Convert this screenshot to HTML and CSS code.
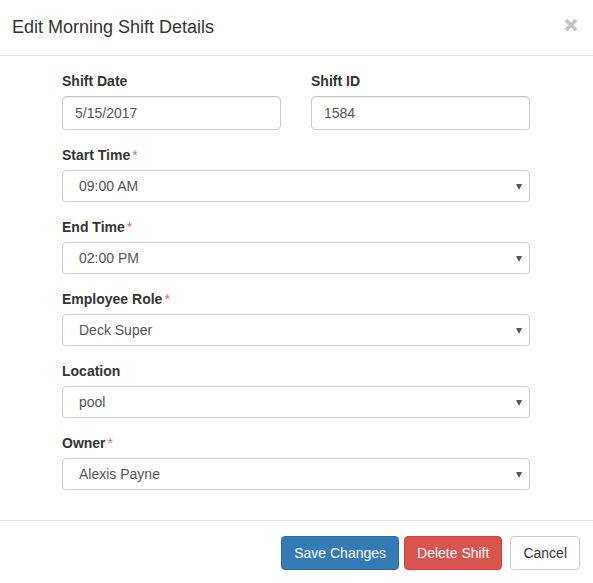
FILE: index.html
```html
<!DOCTYPE html>
<html>
<head>
<meta charset="utf-8">
<link rel="stylesheet" href="styles.css">
</head>
<body>
<div class="modal">
  <div class="modal-header">
    <h4 class="modal-title">Edit Morning Shift Details</h4>
    <button class="close" aria-label="Close">
      <svg width="14" height="14" viewBox="0 0 14 14"><path d="M2 2 L12 12 M12 2 L2 12" stroke="#c4c4c4" stroke-width="3.6" stroke-linecap="butt"/></svg>
    </button>
  </div>
  <div class="modal-body">
    <form class="form">
      <div class="row">
        <div class="form-group half">
          <label class="label">Shift Date</label>
          <div class="input">5/15/2017</div>
        </div>
        <div class="form-group half">
          <label class="label">Shift ID</label>
          <div class="input">1584</div>
        </div>
      </div>
      <div class="form-group">
        <label class="label">Start Time<span class="req">*</span></label>
        <div class="select">09:00 AM<span class="caret"></span></div>
      </div>
      <div class="form-group">
        <label class="label">End Time<span class="req">*</span></label>
        <div class="select">02:00 PM<span class="caret"></span></div>
      </div>
      <div class="form-group">
        <label class="label">Employee Role<span class="req">*</span></label>
        <div class="select">Deck Super<span class="caret"></span></div>
      </div>
      <div class="form-group">
        <label class="label">Location</label>
        <div class="select">pool<span class="caret"></span></div>
      </div>
      <div class="form-group">
        <label class="label">Owner<span class="req">*</span></label>
        <div class="select">Alexis Payne<span class="caret"></span></div>
      </div>
    </form>
  </div>
  <div class="modal-footer">
    <button class="btn btn-primary">Save Changes</button>
    <button class="btn btn-danger">Delete Shift</button>
    <button class="btn btn-default">Cancel</button>
  </div>
</div>
</body>
</html>
```
FILE: styles.css
```css
* { box-sizing: border-box; }
html, body {
  margin: 0;
  padding: 0;
  background: #fff;
}
body {
  font-family: "Liberation Sans", Arial, sans-serif;
  font-size: 14px;
  line-height: 20px;
  color: #333;
}
.modal {
  width: 593px;
  background: #fff;
}
.modal-header {
  height: 56px;
  border-bottom: 1px solid #e5e5e5;
  display: flex;
  align-items: center;
  justify-content: space-between;
  padding: 0 15px 0 12px;
}
.modal-title {
  margin: 0;
  font-size: 18px;
  font-weight: normal;
  line-height: 26px;
  color: #333;
  position: relative;
  top: -1px;
}
.close {
  border: 0;
  background: none;
  padding: 0;
  width: 14px;
  height: 14px;
  display: block;
  cursor: pointer;
  position: relative;
  top: -3px;
}
.close svg { display: block; }
.modal-body {
  padding: 15px 0 15px 0;
}
.form {
  width: 468px;
  margin: 0 0 0 62px;
}
.row {
  display: flex;
  gap: 30px;
}
.half { flex: 0 0 219px; width: 219px; }
.form-group {
  margin-bottom: 15px;
}
.label {
  display: block;
  font-weight: bold;
  margin-bottom: 5px;
  line-height: 20px;
  color: #333;
}
.req {
  color: #e0716d;
  font-weight: normal;
  margin-left: 2px;
}
.input {
  height: 34px;
  border: 1px solid #ccc;
  border-radius: 4px;
  padding: 6px 12px;
  color: #555;
  line-height: 20px;
  box-shadow: inset 0 1px 1px rgba(0,0,0,.075);
}
.select {
  position: relative;
  height: 32px;
  border: 1px solid #ccc;
  border-radius: 4px;
  padding: 5px 16px;
  color: #555;
  line-height: 20px;
}
.caret {
  position: absolute;
  right: 4px;
  top: 13px;
  width: 0;
  height: 0;
  border-left: 3px solid transparent;
  border-right: 3px solid transparent;
  border-top: 6px solid #555;
  margin-right: 3px;
}
.modal-footer {
  border-top: 1px solid #e5e5e5;
  padding: 15px 13px 15px 15px;
  display: flex;
  justify-content: flex-end;
  gap: 5px;
}
.btn {
  font-family: "Liberation Sans", Arial, sans-serif;
  font-size: 14px;
  line-height: 20px;
  height: 34px;
  padding: 6px 12px;
  border: 1px solid transparent;
  border-radius: 4px;
  cursor: pointer;
}
.btn-primary {
  background: #337ab7;
  border-color: #2e6da4;
  color: #fff;
}
.btn-danger {
  background: #d9534f;
  border-color: #d43f3a;
  color: #fff;
  margin-right: 3px;
}
.btn-default {
  background: #fff;
  border-color: #ccc;
  color: #333;
}
```
